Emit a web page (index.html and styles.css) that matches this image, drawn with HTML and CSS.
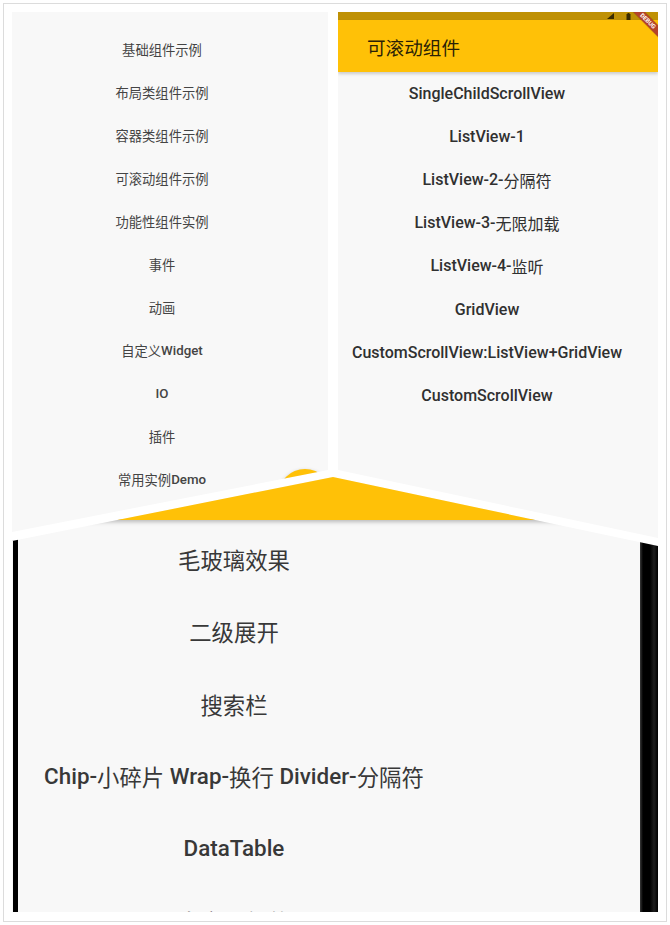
FILE: index.html
```html
<!DOCTYPE html>
<html lang="zh-CN">
<head>
<meta charset="utf-8">
<title>Flutter 示例拼图</title>
<link rel="stylesheet" href="styles.css">
</head>
<body>
<div class="frame">
  <div class="collage">
    <section class="tile tile-bottom">
      <div class="edge edge-left"></div>
      <div class="screen">
        <div class="appbar-big"></div>
        <ul class="list list-big">
          <li>毛玻璃效果</li>
          <li>二级展开</li>
          <li>搜索栏</li>
          <li><span class="lat">Chip-</span>小碎片<span class="lat">&nbsp;Wrap-</span>换行<span class="lat">&nbsp;Divider-</span>分隔符</li>
          <li><span class="lat">DataTable</span></li>
          <li>自定义组件</li>
        </ul>
      </div>
      <div class="edge edge-right"></div>
    </section>

    <section class="tile tile-tl">
      <ul class="list list-small">
        <li>基础组件示例</li>
        <li>布局类组件示例</li>
        <li>容器类组件示例</li>
        <li>可滚动组件示例</li>
        <li>功能性组件实例</li>
        <li>事件</li>
        <li>动画</li>
        <li>自定义<span class="lat">Widget</span></li>
        <li><span class="lat">IO</span></li>
        <li>插件</li>
        <li>常用实例<span class="lat">Demo</span></li>
      </ul>
      <div class="fab"></div>
    </section>

    <section class="tile tile-tr">
      <div class="statusbar">
        <svg class="sb-icon" width="7" height="6" viewBox="0 0 7 6"><path d="M0 6 L7 0 L7 6 Z" fill="#3a2c00"/></svg>
        <svg class="sb-icon" width="5" height="7" viewBox="0 0 5 7"><rect x="0.5" y="1" width="4" height="6" fill="#3a2c00"/><rect x="1.5" y="0" width="2" height="1" fill="#3a2c00"/></svg>
      </div>
      <div class="appbar">
        <span class="appbar-title">可滚动组件</span>
      </div>
      <ul class="list list-mid">
        <li><span class="lat">SingleChildScrollView</span></li>
        <li><span class="lat">ListView-1</span></li>
        <li><span class="lat">ListView-2-</span>分隔符</li>
        <li><span class="lat">ListView-3-</span>无限加载</li>
        <li><span class="lat">ListView-4-</span>监听</li>
        <li><span class="lat">GridView</span></li>
        <li><span class="lat">CustomScrollView:ListView+GridView</span></li>
        <li><span class="lat">CustomScrollView</span></li>
      </ul>
      <div class="debug-corner"><div class="debug-ribbon">DEBUG</div></div>
    </section>
  </div>
</div>
</body>
</html>
```

FILE: styles.css
```css
* {
  box-sizing: border-box;
  margin: 0;
  padding: 0;
}

html, body {
  width: 670px;
  height: 925px;
  background: #ffffff;
  overflow: hidden;
}

body {
  padding: 3px;
  font-family: Roboto, "Noto Sans CJK SC", sans-serif;
}

.frame {
  width: 664px;
  height: 919px;
  border: 1px solid #dcdcdc;
  padding: 8px;
  background: #ffffff;
}

.collage {
  display: grid;
  grid-template-columns: 316px 10px 320px;
  grid-template-rows: 428px 105px 368px;
  width: 646px;
  height: 901px;
}

.tile {
  background: #f8f8f8;
  overflow: hidden;
  position: relative;
}

.tile-bottom {
  grid-column: 1 / 4;
  grid-row: 2 / 4;
  display: flex;
  clip-path: polygon(0 101px, 321px 37px, 646px 106px, 646px 472px, 0 472px);
}

.tile-tl {
  grid-column: 1;
  grid-row: 1 / 3;
  clip-path: polygon(0 0, 100% 0, 316px 458px, 0 520px);
}

.tile-tr {
  grid-column: 3;
  grid-row: 1 / 3;
  clip-path: polygon(0 0, 100% 0, 320px 526px, 0 458px);
}

.list {
  list-style: none;
  text-align: center;
}

.list li {
  display: flex;
  align-items: center;
  justify-content: center;
  white-space: nowrap;
}

.lat {
  font-weight: 500;
}

/* top-left */
.list-small {
  width: 300px;
  padding-top: 15.5px;
  font-size: 13.3px;
  color: #444444;
}

.list-small li {
  height: 43px;
}

.fab {
  position: absolute;
  left: 266px;
  top: 457px;
  width: 54px;
  height: 54px;
  border-radius: 50%;
  background: #ffc107;
  box-shadow: 0 2px 4px rgba(0, 0, 0, 0.3);
}

/* top-right */
.statusbar {
  height: 8px;
  background: #bf9105;
  display: flex;
  align-items: center;
  justify-content: flex-end;
  gap: 12px;
  padding-right: 27px;
}

.sb-icon {
  display: block;
}

.appbar {
  height: 52px;
  background: #ffc107;
  display: flex;
  align-items: center;
  padding-left: 29px;
  box-shadow: 0 2px 3px rgba(0, 0, 0, 0.18);
  position: relative;
}

.appbar-title {
  font-size: 18.6px;
  color: #2a2106;
}

.list-mid {
  width: 298px;
  font-size: 16px;
  color: #303030;
}

.list-mid li {
  height: 43.1px;
}

.debug-corner {
  position: absolute;
  top: 0;
  right: 0;
  width: 26px;
  height: 26px;
  overflow: hidden;
}

.debug-ribbon {
  position: absolute;
  top: 5px;
  right: -15px;
  width: 50px;
  height: 8px;
  background: #b5432a;
  color: #ffffff;
  font-size: 6px;
  font-weight: 700;
  line-height: 8px;
  text-align: center;
  transform: rotate(45deg);
  box-shadow: 0 0 1px rgba(0, 0, 0, 0.4);
}

/* bottom */
.edge {
  flex: none;
  height: 100%;
}

.edge-left {
  width: 6px;
  border-left: 1px solid #f8f8f8;
  background: #000;
}

.edge-right {
  width: 18px;
  background: linear-gradient(90deg, #3a3a3a 0, #000 3px, #000 10px, #1e1e1e 14px, #000 18px);
}

.screen {
  flex: 1;
  min-width: 0;
}

.appbar-big {
  height: 80px;
  background: #ffc107;
  box-shadow: 0 2px 4px rgba(0, 0, 0, 0.25);
  position: relative;
}

.list-big {
  width: 432px;
  padding-top: 3px;
  font-size: 22.4px;
  color: #383838;
}

.list-big li {
  height: 72.3px;
}
```
